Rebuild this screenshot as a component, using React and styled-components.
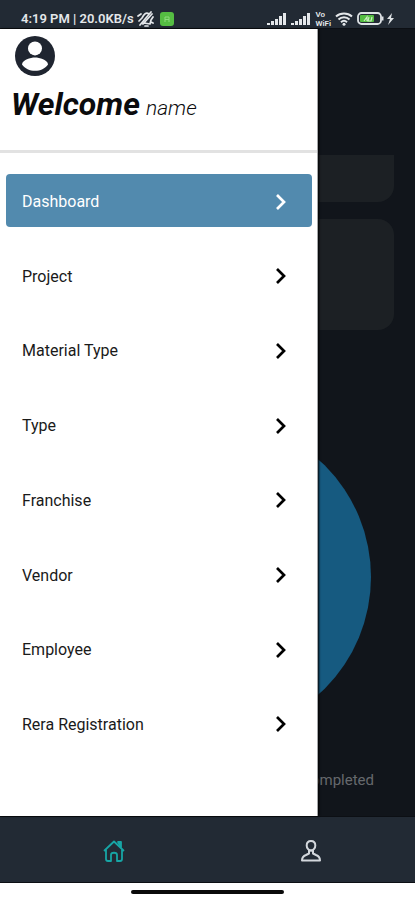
import React from "react";
import styled, { createGlobalStyle } from "styled-components";

const GlobalStyle = createGlobalStyle`
  * {
    box-sizing: border-box;
  }
  body {
    margin: 0;
    background: #fff;
    font-family: Roboto, "Liberation Sans", sans-serif;
  }
`;
const Screen = styled.div`
  min-height: 100vh;
  display: flex;
  flex-direction: column;
`;
const StatusBar = styled.header`
  display: flex;
  justify-content: space-between;
  align-items: center;
  height: 29px;
  padding: 9px 20px 0 21px;
  background: #222a34;
  color: #e4e7ea;
  border-bottom: 1px solid #0c0f14;
`;
const StatusGroup = styled.div`
  display: flex;
  align-items: center;
  gap: ${(props) => props.$gap}px;
`;
const Clock = styled.span`
  font-size: 13px;
  font-weight: 600;
  line-height: 14px;
`;
const VoWifi = styled.span`
  display: flex;
  flex-direction: column;
  font-size: 8px;
  font-weight: 600;
  line-height: 9px;
`;
const Body = styled.div`
  position: relative;
  flex: 1;
  display: flex;
  background: #11151b;
`;
const Dashboard = styled.main`
  flex: 1;
  display: flex;
  flex-direction: column;
  padding: 126px 21px 26px;
  overflow: hidden;
`;
const Card = styled.section`
  height: ${(props) => props.$height}px;
  margin-bottom: 17px;
  border-radius: ${(props) => (props.$flatTop ? "0 0 16px 16px" : "16px")};
  background: #1c2024;
`;
const Pie = styled.svg`
  display: block;
  width: 316px;
  height: 316px;
  margin: 72px 0 0 34px;
`;
const Legend = styled.p`
  margin: auto 20px 0 0;
  color: #66696d;
  font-size: 15px;
  line-height: 20px;
  text-align: right;
`;
const Drawer = styled.aside`
  position: absolute;
  top: 0;
  bottom: 0;
  left: 0;
  width: calc(100% - 97px);
  display: flex;
  flex-direction: column;
  background: #fff;
  border-right: 1px solid #a4a6a8;
  box-shadow: 1px 0 2px #000;
`;
const Profile = styled.div`
  height: 124px;
  padding: 3px 11px 0;
  border-bottom: 3px solid #e2e2e2;
`;
const Avatar = styled.svg`
  display: block;
  width: 48px;
  height: 48px;
`;
const Greeting = styled.div`
  display: flex;
  align-items: baseline;
  gap: 6px;
  color: #0b0b0d;
  font-style: italic;
  line-height: 48px;
`;
const Welcome = styled.strong`
  font-size: 32px;
  font-weight: 700;
`;
const UserName = styled.span`
  font-size: 21px;
  font-weight: 300;
`;
const Menu = styled.nav`
  flex: 1;
  display: flex;
  flex-direction: column;
  justify-content: space-between;
  padding: 21px 5px 66px 6px;
`;
const MenuItem = styled.button`
  display: flex;
  justify-content: space-between;
  align-items: center;
  height: 53px;
  padding: 2px 24px 0 16px;
  border: none;
  border-radius: 4px;
  background: ${(props) => (props.$active ? "#528aae" : "transparent")};
  color: ${(props) => (props.$active ? "#fff" : "#1a1a1a")};
  font-family: inherit;
  font-size: 16px;
  cursor: pointer;
`;
const Chevron = styled.svg`
  width: 14px;
  height: 18px;
  color: ${(props) => (props.$active ? "#fff" : "#000")};
`;
const TabBar = styled.nav`
  display: flex;
  height: 67px;
  padding: 0 6px 0 16px;
  background: #222a34;
  border-top: 1px solid #0c0f14;
  border-bottom: 1px solid #0c0f14;
`;
const Tab = styled.button`
  flex: 1;
  display: flex;
  justify-content: center;
  align-items: center;
  padding: 2px 0 0;
  border: none;
  background: transparent;
  color: ${(props) => (props.$active ? "#17a5a5" : "#d3d7dc")};
  cursor: pointer;
`;
const GestureArea = styled.footer`
  display: flex;
  justify-content: center;
  height: 17px;
  padding-top: 7px;
  background: #fff;
`;
const GestureBar = styled.div`
  width: 37%;
  height: 4px;
  border-radius: 2px;
  background: #0a0a0a;
`;

const menuItems = [
  "Dashboard",
  "Project",
  "Material Type",
  "Type",
  "Franchise",
  "Vendor",
  "Employee",
  "Rera Registration",
];

const Signal = () => (
  <svg width="20" height="14" viewBox="0 0 20 14" fill="currentColor">
    <path d="M0 11h3v2H0zM4 9h3v4H4zM8 7h3v6H8zM12 4h3v9h-3zM16 1h3v12h-3z" />
  </svg>
);

const BellOff = () => (
  <svg
    width="18"
    height="16"
    viewBox="0 0 18 16"
    fill="none"
    stroke="currentColor"
    strokeWidth="1.7"
    strokeLinecap="round"
    strokeLinejoin="round"
  >
    <path d="M2 10l3-3c2-4 4-6 7-4M7 12l6 1 1-4 2-3M8 15l3 0M3 14L14 1M1 5l3-2M6 13L15 3M14 11l2 1" />
  </svg>
);

const Wifi = () => (
  <svg
    width="18"
    height="14"
    viewBox="0 0 18 14"
    fill="none"
    stroke="currentColor"
    strokeWidth="2"
  >
    <path d="M1 4.500c4.500-4 11.500-4 16 0M3.500 7.500c3-3 8-3 11 0M6 10.300c2-2 4-2 6 0" />
    <circle cx="9" cy="12.300" r="1.500" fill="currentColor" stroke="none" />
  </svg>
);

const Battery = () => (
  <svg width="38" height="14" viewBox="0 0 38 14" fill="none">
    <rect x="1" y="1" width="23" height="11" rx="3.500" stroke="#dfe3e6" strokeWidth="1.800" />
    <path d="M25.500 4.500v4" stroke="#dfe3e6" strokeWidth="2" />
    <rect x="3" y="3" width="14" height="7" rx="1" fill="#55bd42" />
    <path d="M7 9l3-4v4M12 5l-1 4h3l1-4" stroke="#c9edbf" strokeWidth="1.200" />
    <path d="M35 1l-5 6h3l-2 6 6-7h-3z" fill="#dfe3e6" />
  </svg>
);

function App() {
  const [active, setActive] = React.useState("Dashboard");

  return (
    <Screen>
      <GlobalStyle />
      <StatusBar>
        <StatusGroup $gap={3}>
          <Clock>4:19 PM | 20.0KB/s</Clock>
          <BellOff />
          <svg width="20" height="14" viewBox="0 0 20 14">
            <rect x="2" y="0" width="14" height="14" rx="3" fill="#55bd42" />
            <path d="M7 10V5h4v5M7 7.500h4" fill="none" stroke="#8edb7d" />
          </svg>
        </StatusGroup>
        <StatusGroup $gap={4}>
          <Signal />
          <Signal />
          <VoWifi>
            <span>Vo</span>
            <span>WiFi</span>
          </VoWifi>
          <Wifi />
          <Battery />
        </StatusGroup>
      </StatusBar>
      <Body>
        <Dashboard>
          <Card $height={47} $flatTop />
          <Card $height={111} />
          <Pie viewBox="0 0 316 316">
            <circle cx="158" cy="158" r="158" fill="#165a80" />
          </Pie>
          <Legend>Completed</Legend>
        </Dashboard>
        <Drawer>
          <Profile>
            <Avatar viewBox="0 0 24 24">
              <circle cx="12" cy="12" r="10" fill="#1f2530" />
              <circle cx="12" cy="8.200" r="3.500" fill="#fff" />
              <path
                d="M12 19.400c-2.700 0-5-1.200-6.500-3.200.1-2.200 4.300-3.400 6.500-3.400s6.400 1.200 6.500 3.400c-1.500 2-3.800 3.200-6.500 3.200z"
                fill="#fff"
              />
            </Avatar>
            <Greeting>
              <Welcome>Welcome</Welcome>
              <UserName>name</UserName>
            </Greeting>
          </Profile>
          <Menu>
            {menuItems.map((item) => (
              <MenuItem
                key={item}
                $active={item === active}
                onClick={() => setActive(item)}
              >
                {item}
                <Chevron
                  $active={item === active}
                  viewBox="0 0 14 18"
                  fill="none"
                  stroke="currentColor"
                  strokeWidth="2.700"
                >
                  <path d="M3 2l7 7-7 7" />
                </Chevron>
              </MenuItem>
            ))}
          </Menu>
        </Drawer>
      </Body>
      <TabBar>
        <Tab $active aria-label="Home">
          <svg
            width="24"
            height="24"
            viewBox="0 0 24 24"
            fill="none"
            stroke="currentColor"
            strokeWidth="1.800"
            strokeLinejoin="round"
            strokeLinecap="round"
          >
            <path d="M2.500 11.500L12 2.500l9.500 9M4 11v9q0 2 2 2h3v-6c0-3 6-3 6 0v6h3q2 0 2-2v-9" />
            <path d="M16 3h3v5z" fill="currentColor" />
          </svg>
        </Tab>
        <Tab aria-label="Profile">
          <svg
            width="24"
            height="24"
            viewBox="0 0 24 24"
            fill="none"
            stroke="currentColor"
            strokeWidth="2"
            strokeLinejoin="round"
          >
            <path d="M12 2c3 0 4.300 2 4.300 4.500S14.500 11.500 12 11.500 7.700 9 7.700 6.500 9 2 12 2z" />
            <path d="M3 21.500c0-3 1.500-4.500 4-5.500l3-1.500v-3h4v3l3 1.500c2.500 1 4 2.500 4 5.500z" />
          </svg>
        </Tab>
      </TabBar>
      <GestureArea>
        <GestureBar />
      </GestureArea>
    </Screen>
  );
}

export default App;
